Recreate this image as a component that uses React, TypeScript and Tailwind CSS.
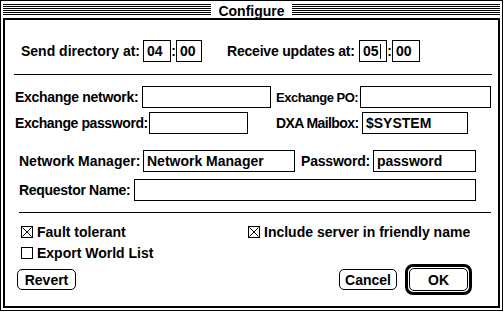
import React from "react";

function Stripes() {
  return (
    <div className="flex-1 flex flex-col gap-px pt-px">
      {[0, 1, 2, 3, 4, 5].map((i) => (
        <div key={i} className="h-px bg-black" />
      ))}
    </div>
  );
}

function Field({ className, value, cursor }: { className: string; value?: string; cursor?: boolean }) {
  return (
    <div className={"h-[22px] border border-black flex items-center pl-[3px] whitespace-nowrap overflow-hidden " + className}>
      {value ? <span>{value}</span> : null}
      {cursor ? <span className="inline-block w-px h-[15px] bg-black ml-px" /> : null}
    </div>
  );
}

function Check({ checked }: { checked: boolean }) {
  return (
    <svg width="12" height="12" viewBox="0 0 12 12" shapeRendering="crispEdges" className="shrink-0">
      <rect x="0.5" y="0.5" width="11" height="11" fill="white" stroke="black" strokeWidth="1" />
      {checked ? (
        <>
          <path d="M1.5 1.5 L10.5 10.5" stroke="black" strokeWidth="1" shapeRendering="auto" />
          <path d="M10.5 1.5 L1.5 10.5" stroke="black" strokeWidth="1" shapeRendering="auto" />
        </>
      ) : null}
    </svg>
  );
}

export default function App() {
  return (
    <div className="w-[504px] h-[313px] bg-white font-['Liberation_Sans',Arial,sans-serif] font-bold text-[14px] leading-none text-black">
      <div className="w-[503px] h-[311px] border border-black p-[2px] flex flex-col">
        {/* title bar */}
        <div className="h-[15px] flex items-start shrink-0">
          <Stripes />
          <div className="px-[7px] h-[15px] flex items-center">Configure</div>
          <Stripes />
        </div>
        {/* inner frame */}
        <div className="flex-1 border-2 border-black flex flex-col">
          {/* row 1 */}
          <div className="mt-[20px] ml-[16px] flex items-center h-[22px]">
            <div className="w-[122px] whitespace-nowrap">Send directory at:</div>
            <Field className="w-[28px]" value="04" />
            <div className="w-[5px] flex justify-center">:</div>
            <Field className="w-[26px]" value="00" />
            <div className="ml-[25px] w-[132px] whitespace-nowrap tracking-[-0.2px]">Receive updates at:</div>
            <Field className="w-[28px]" value="05" cursor />
            <div className="w-[5px] flex justify-center">:</div>
            <Field className="w-[28px]" value="00" />
          </div>
          {/* separator */}
          <div className="mt-[12px] ml-[9px] w-[478px] h-px bg-black" />
          {/* row 2 */}
          <div className="mt-[11px] ml-[10px] flex items-center h-[22px]">
            <div className="w-[127px] whitespace-nowrap tracking-[-0.3px]">Exchange network:</div>
            <Field className="w-[129px]" />
            <div className="ml-[5px] w-[84px] whitespace-nowrap text-[13px] tracking-[-0.5px]">Exchange PO:</div>
            <Field className="w-[131px]" />
          </div>
          {/* row 3 */}
          <div className="mt-[4px] ml-[10px] flex items-center h-[22px]">
            <div className="w-[134px] whitespace-nowrap tracking-[-0.4px]">Exchange password:</div>
            <Field className="w-[99px]" />
            <div className="ml-[28px] w-[86px] whitespace-nowrap tracking-[-0.6px]">DXA Mailbox:</div>
            <Field className="w-[106px]" value="$SYSTEM" />
          </div>
          {/* row 4 */}
          <div className="mt-[16px] ml-[14px] flex items-center h-[22px]">
            <div className="w-[124px] whitespace-nowrap">Network Manager:</div>
            <Field className="w-[152px]" value="Network Manager" />
            <div className="ml-[6px] w-[72px] whitespace-nowrap tracking-[-0.2px]">Password:</div>
            <Field className="w-[103px]" value="password" />
          </div>
          {/* row 5 */}
          <div className="mt-[7px] ml-[14px] flex items-center h-[22px]">
            <div className="w-[115px] whitespace-nowrap tracking-[-0.3px]">Requestor Name:</div>
            <Field className="w-[342px]" />
          </div>
          {/* separator */}
          <div className="mt-[11px] ml-[14px] w-[472px] h-px bg-black" />
          {/* checkboxes */}
          <div className="mt-[13px] ml-[16px] flex items-center h-[12px]">
            <div className="w-[227px] flex items-center gap-[4px] whitespace-nowrap">
              <Check checked />
              <span>Fault tolerant</span>
            </div>
            <div className="flex items-center gap-[4px] whitespace-nowrap">
              <Check checked />
              <span>Include server in friendly name</span>
            </div>
          </div>
          <div className="mt-[9px] ml-[16px] flex items-center h-[12px]">
            <div className="flex items-center gap-[4px] whitespace-nowrap">
              <Check checked={false} />
              <span>Export World List</span>
            </div>
          </div>
          {/* buttons */}
          <div className="mt-[5px] ml-[12px] flex items-center h-[31px]">
            <div className="w-[59px] h-[21px] border border-black rounded-[5px] flex items-center justify-center">Revert</div>
            <div className="ml-[263px] w-[58px] h-[21px] border border-black rounded-[5px] flex items-center justify-center">Cancel</div>
            <div className="ml-[8px] w-[67px] h-[31px] border-[3px] border-black rounded-[8px] p-px flex">
              <div className="flex-1 border border-black rounded-[5px] flex items-center justify-center">OK</div>
            </div>
          </div>
        </div>
      </div>
    </div>
  );
}
